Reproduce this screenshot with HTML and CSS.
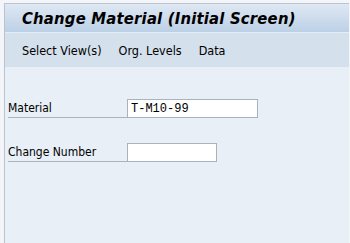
FILE: index.html
```html
<!DOCTYPE html>
<html lang="en">
<head>
    <meta charset="UTF-8">
    <title>Change Material (Initial Screen)</title>
    <link rel="stylesheet" href="styles.css">
</head>
<body>
    <div class="screen">
        <div class="title-bar">
            <h1>Change Material (Initial Screen)</h1>
        </div>
        <div class="menu-bar">
            <span>Select View(s)</span>
            <span>Org. Levels</span>
            <span>Data</span>
        </div>
        <div class="content">
            <div class="field-row">
                <label for="material">Material</label>
                <input type="text" id="material" class="wide" value="T-M10-99">
            </div>
            <div class="field-row">
                <label for="changeNumber">Change Number</label>
                <input type="text" id="changeNumber" class="short">
            </div>
        </div>
    </div>
</body>
</html>
```

FILE: styles.css
```css
body {
    margin: 0;
    padding: 3px 1px 1px 4px;
    background-color: #f3f5f8;
    font-family: Tahoma, "DejaVu Sans Condensed", "DejaVu Sans", sans-serif;
    font-size: 12px;
    color: #000;
    height: 243px;
    box-sizing: border-box;
}
.screen {
    height: 100%;
    display: flex;
    flex-direction: column;
    border-top: 1px solid #b8c4d2;
    border-left: 1px solid #b8c4d2;
}
.title-bar {
    height: 28px;
    padding-left: 17px;
    display: flex;
    align-items: center;
    background: linear-gradient(#dfe8f3, #bcd0e6);
    border-bottom: 1px solid #e4ecf5;
}
.title-bar h1 {
    margin: 0;
    font-size: 16.5px;
    font-weight: bold;
    font-style: italic;
    letter-spacing: 0.2px;
}
.menu-bar {
    height: 34px;
    padding-left: 17px;
    display: flex;
    align-items: center;
    gap: 17px;
    background-color: #d4e0ec;
    font-size: 12.5px;
}
.content {
    flex: 1;
    background-color: #e8eff7;
    padding-top: 32px;
}
.field-row {
    display: flex;
    align-items: flex-end;
    margin-left: 3px;
    margin-bottom: 25px;
}
.field-row label {
    width: 119px;
    line-height: 14px;
    border-bottom: 1px solid #a8b4c2;
    padding-bottom: 2px;
}
input {
    height: 19px;
    box-sizing: border-box;
    margin: 0;
    padding: 0 3px;
    border: 1px solid #a9b3bd;
    background-color: #fff;
    font-family: "Liberation Mono", monospace;
    font-size: 12px;
    color: #000;
}
.wide {
    width: 131px;
}
.short {
    width: 90px;
}
```
